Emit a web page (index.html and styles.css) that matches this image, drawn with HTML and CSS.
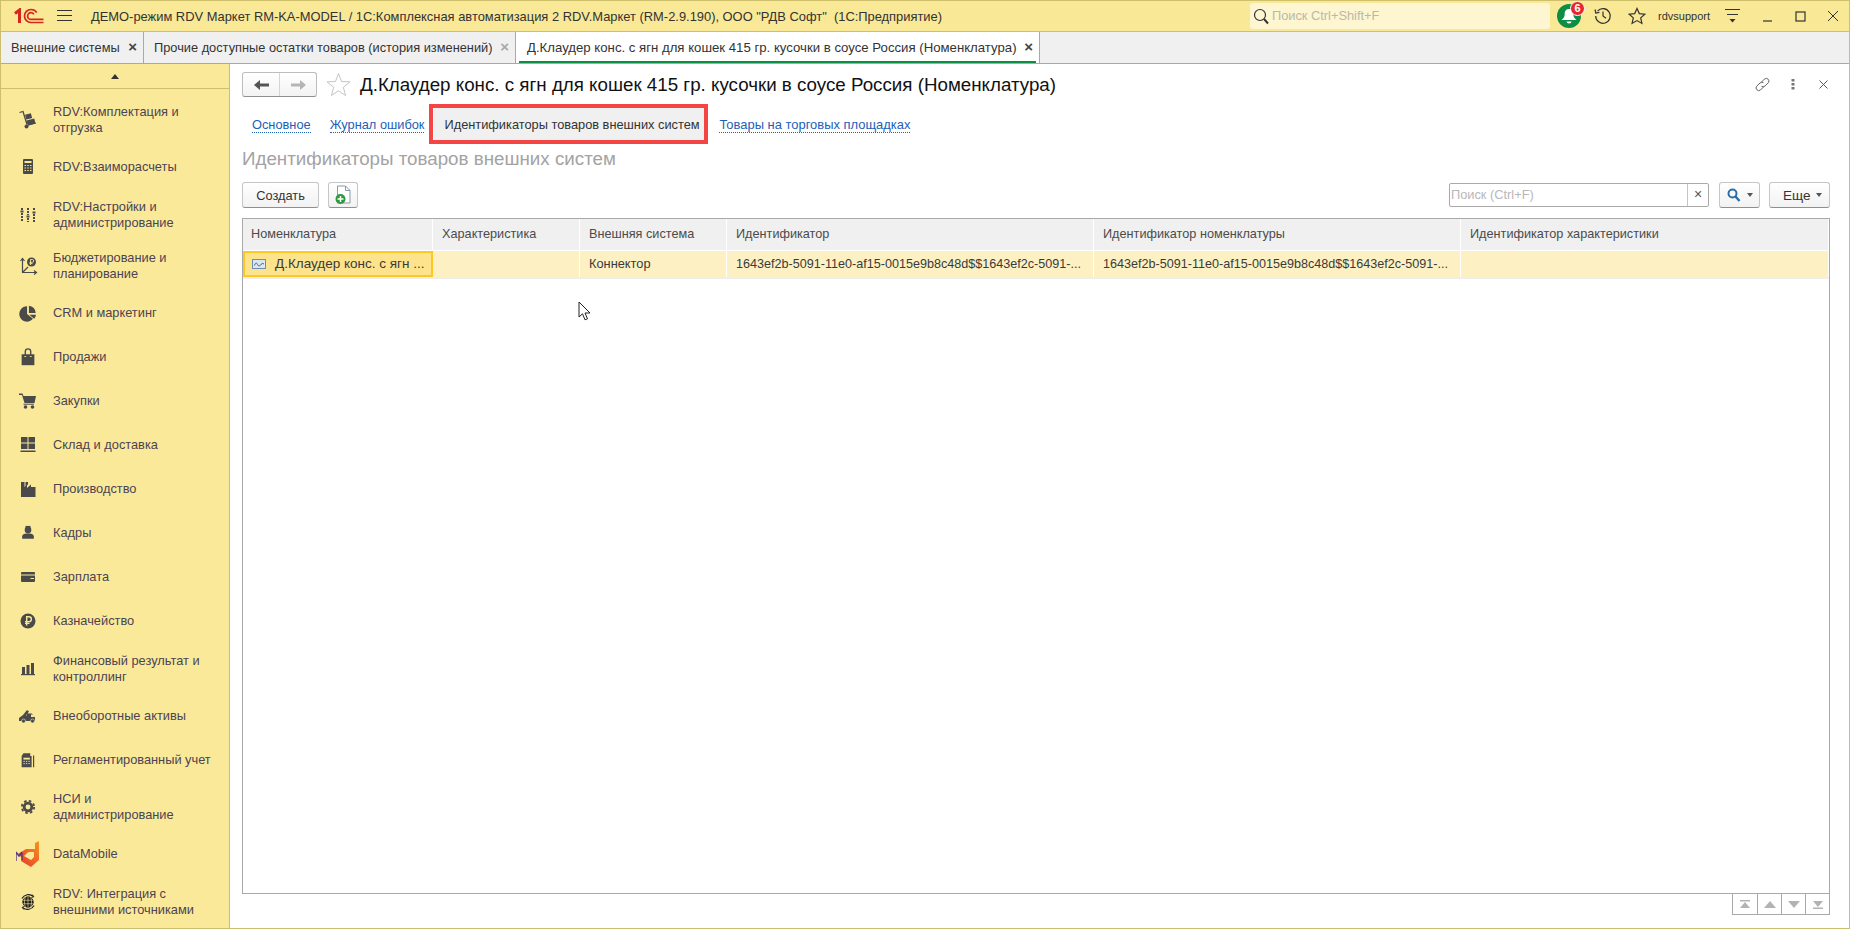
FILE: index.html
```html
<!DOCTYPE html>
<html lang="ru">
<head>
<meta charset="utf-8">
<title>1С</title>
<link rel="stylesheet" href="styles.css">
</head>
<body>
<div class="window">
  <header class="topbar">
    <svg class="logo" width="30" height="16" viewBox="14 8 30 16" fill="none" stroke="#d8261f"><path d="M15 13.5 19.5 10V23" stroke-width="3"/><path d="M36.8 12.5C35.4 10.4 33.4 9.5 31 9.5a6.5 6.5 0 0 0 0 13H43.5" stroke-width="1.7"/><path d="M33.9 14.4C33.2 13.2 32.2 12.6 31 12.6a3.4 3.4 0 0 0 0 6.8H43.5" stroke-width="1.7"/></svg>
    <svg class="burger" width="15" height="12" viewBox="0 0 15 12" stroke="#333"><path d="M0 .5H15M0 5.5H15M0 10.5H15"/></svg>
    <div class="apptitle">ДЕМО-режим RDV Маркет RM-KA-MODEL / 1С:Комплексная автоматизация 2 RDV.Маркет (RM-2.9.190), ООО "РДВ Софт"  (1С:Предприятие)</div>
    <div class="globalsearch">
      <svg width="16" height="17" viewBox="0 0 16 17" fill="none" stroke="#333"><circle cx="7" cy="7" r="5.5" stroke-width="1.2"/><path d="M11 11l4 4.5" stroke-width="2"/></svg>
      <span>Поиск Ctrl+Shift+F</span>
    </div>
    <div class="bell">
      <svg width="24" height="24" viewBox="0 0 24 24"><circle cx="12" cy="12" r="12" fill="#0c8f45"/><path d="M12 5c3 0 4.300 2.300 4.300 5 0 3 1.200 4.500 3.200 6H4.500c2-1.500 3.200-3 3.200-6 0-2.700 1.300-5 4.300-5z" fill="#fff"/><path d="M9.500 17.500h5a2.500 2 0 0 1-5 0z" fill="#fff"/></svg>
      <span class="badge">6</span>
    </div>
    <svg class="tb-history" width="18" height="18" viewBox="0 0 18 18" fill="none" stroke="#333" stroke-width="1.200"><path d="M3.500 4.200A7.300 7.300 0 1 1 1.700 9"/><path d="M1 2.500l.8 3.500 3.600-.6" /><path d="M9 4.500V9l3 2.300"/></svg>
    <svg class="tb-star" width="18" height="18" viewBox="0 0 18 18" fill="none" stroke="#333" stroke-width="1.200"><path d="M9 1.500l2.300 5.100 5.500.6-4.100 3.700 1.200 5.500L9 13.600l-4.900 2.800 1.200-5.500-4.100-3.700 5.500-.6z"/></svg>
    <span class="username">rdvsupport</span>
    <svg class="tb-menu" width="15" height="14" viewBox="0 0 15 14" stroke="#333"><path d="M0 .5H15M2 5.500H13"/><path d="M4.500 10h6l-3 3.500z" fill="#333" stroke="none"/></svg>
    <svg class="tb-min" width="11" height="11" viewBox="0 0 11 11" stroke="#333" stroke-width="1.200"><path d="M1 10H10"/></svg>
    <svg class="tb-max" width="11" height="11" viewBox="0 0 11 11" fill="none" stroke="#333" stroke-width="1.200"><rect x="1" y="1" width="9" height="9"/></svg>
    <svg class="tb-close" width="12" height="12" viewBox="0 0 12 12" stroke="#333"><path d="M1 1 11 11M11 1 1 11"/></svg>
  </header>

  <nav class="tabs">
    <div class="tab tab-a"><span>Внешние системы</span><b class="x x-dark">×</b></div>
    <div class="tab tab-b"><span>Прочие доступные остатки товаров (история изменений)</span><b class="x x-light">×</b></div>
    <div class="tab tab-c"><span>Д.Клаудер конс. с ягн для кошек 415 гр. кусочки в соусе Россия (Номенклатура)</span><b class="x x-dark">×</b></div>
  </nav>

  <div class="body">
    <aside class="sidebar">
      <div class="scrollup"><i class="tri"></i></div>
      <ul class="menu">
        <li class="item two">
          <svg viewBox="0 0 20 20" fill="#4a4a4a"><path d="M1.500 2.500 5 1.500l4 13" fill="none" stroke="#4a4a4a" stroke-width="1.300"/><rect x="7.500" y="4" width="6" height="5" transform="rotate(-15 10 6)"/><rect x="9" y="9.500" width="8" height="5" transform="rotate(-15 13 12)"/><circle cx="8.500" cy="16.500" r="2"/><path d="M9 15.500l9-2.500" stroke="#4a4a4a" fill="none"/></svg>
          <span>RDV:Комплектация и<br>отгрузка</span>
        </li>
        <li class="item">
          <svg viewBox="0 0 20 20"><rect x="3" y="1" width="10" height="15" rx="1" fill="#4a4a4a" transform="translate(2 1)"/><path d="M6.500 4h7v2h-7z" fill="#fbe99a"/><path d="M6.500 8.500h1.500M9.300 8.500h1.500M12 8.500h1.500M6.500 11h1.500M9.300 11h1.500M12 11h1.500M6.500 13.500h1.500M9.300 13.500h1.500M12 13.500h1.500" stroke="#fbe99a"/></svg>
          <span>RDV:Взаиморасчеты</span>
        </li>
        <li class="item tall">
          <svg viewBox="0 0 20 20" stroke="#4a4a4a" stroke-width="2" fill="none"><path d="M4 3v2M4 8v9M10 3v7M10 13v4M16 3v3M16 9v8" stroke-dasharray="2 1"/><path d="M2.500 6.500h3M8.500 11.500h3M14.500 7.500h3"/></svg>
          <span>RDV:Настройки и<br>администрирование</span>
        </li>
        <li class="item two">
          <svg viewBox="0 0 20 20" fill="none" stroke="#4a4a4a" stroke-width="1.200"><path d="M4.500 3v13.500H18"/><path d="M2.500 5l2-2.500 2 2.500" /><path d="M16 14.500l2.500 2-2.500 2"/><path d="M4.500 16.500 10 11"/><circle cx="13.500" cy="6" r="4.500" fill="#4a4a4a" stroke="none"/><path d="M12.500 9V3.500h1.800a1.400 1.400 0 0 1 0 2.800h-2.800M11.500 7.600h3" stroke="#fbe99a" stroke-width=".9"/></svg>
          <span>Бюджетирование и<br>планирование</span>
        </li>
        <li class="item">
          <svg viewBox="-1 -1 22 22" fill="#4a4a4a"><path d="M9 2.500v8.500l6.500 5.400A8.500 8.500 0 1 1 9 2.500z"/><path d="M11 2a8 8 0 0 1 7.500 8H11z"/><path d="M11.500 11.800h7.300a8 8 0 0 1-2 4.400z"/></svg>
          <span>CRM и маркетинг</span>
        </li>
        <li class="item">
          <svg viewBox="-1 -1 22 22" fill="#4a4a4a"><path d="M3 7h14v12H3z"/><path d="M7 9V4a3 3 0 0 1 6 0v5" fill="none" stroke="#4a4a4a" stroke-width="1.500"/><path d="M6 9.500h2M12 9.500h2" stroke="#fbe99a"/></svg>
          <span>Продажи</span>
        </li>
        <li class="item">
          <svg viewBox="0 0 20 20" fill="#4a4a4a"><path d="M1 2.500h3.500l1 2.500H18l-1.500 7H6.500L4 4H1z"/><circle cx="7.500" cy="16" r="1.800"/><circle cx="14.500" cy="16" r="1.800"/><path d="M5.500 13.200H16" stroke="#4a4a4a"/></svg>
          <span>Закупки</span>
        </li>
        <li class="item">
          <svg viewBox="0 0 20 20" fill="#4a4a4a"><rect x="3" y="2" width="6.500" height="5.500"/><rect x="10.500" y="2" width="6.500" height="5.500"/><rect x="3" y="8.500" width="6.500" height="5.500"/><rect x="10.500" y="8.500" width="6.500" height="5.500"/><rect x="2.500" y="15.500" width="15" height="1.500"/></svg>
          <span>Склад и доставка</span>
        </li>
        <li class="item">
          <svg viewBox="0 0 20 20" fill="#4a4a4a"><path d="M3 3h3.500v5L9 5.500V9l4-3.500V8l4.500 0V18H3z"/><path d="M7.500 3H10v2.500L7.500 7.500z"/></svg>
          <span>Производство</span>
        </li>
        <li class="item">
          <svg viewBox="-2 -2 24 24" fill="#4a4a4a"><circle cx="10" cy="6.500" r="4"/><rect x="7" y="1.500" width="6" height="3"/><path d="M3 17v-3c0-2 2.500-3 5-3.300h4c2.500.3 5 1.300 5 3.300v3z"/></svg>
          <span>Кадры</span>
        </li>
        <li class="item">
          <svg viewBox="0 0 20 20"><rect x="3" y="5" width="14" height="10" rx="1" fill="#4a4a4a"/><path d="M3 8h14" stroke="#fbe99a"/><path d="M12.500 11.500H16" stroke="#fbe99a"/></svg>
          <span>Зарплата</span>
        </li>
        <li class="item">
          <svg viewBox="0 0 20 20"><circle cx="10" cy="10" r="7.500" fill="#4a4a4a"/><path d="M8.700 14.500V5.800h2.300a2 2 0 0 1 0 4.800H7M7 12.400h4.500" fill="none" stroke="#fbe99a" stroke-width="1.400"/></svg>
          <span>Казначейство</span>
        </li>
        <li class="item tall">
          <svg viewBox="0 0 20 20" fill="#4a4a4a"><rect x="4" y="8" width="3" height="7"/><rect x="8.500" y="6" width="3" height="9"/><rect x="13" y="4" width="3" height="11"/><rect x="3" y="15" width="14" height="1.200"/></svg>
          <span>Финансовый результат и<br>контроллинг</span>
        </li>
        <li class="item short">
          <svg viewBox="0 0 20 20" fill="#4a4a4a"><path d="M1 15v-3l4-3 4-5 2 1.500-3 4h1V7.500h5l3 4v3.500z"/><path d="M13 8.500h2.300l1.700 2.500h-4z" fill="#fbe99a"/><circle cx="5.500" cy="15" r="2" stroke="#fbe99a" stroke-width=".6"/><circle cx="14.500" cy="15" r="2" stroke="#fbe99a" stroke-width=".6"/></svg>
          <span>Внеоборотные активы</span>
        </li>
        <li class="item">
          <svg viewBox="-1 -1 22 22" fill="#4a4a4a"><path d="M3 5.500 5 2.500h7.500v3h1.500V18H3z"/><rect x="5" y="7.500" width="7" height="2" fill="#fbe99a"/><path d="M5 11.500h1.500M7.700 11.500h1.500M10.500 11.500H12M5 14h1.500M7.700 14h1.500M10.500 14H12" stroke="#fbe99a"/><rect x="15.500" y="5" width="1.300" height="13"/></svg>
          <span>Регламентированный учет</span>
        </li>
        <li class="item two">
          <svg viewBox="-3 -3 26 26"><circle cx="10" cy="10" r="5" fill="none" stroke="#4a4a4a" stroke-width="3.600"/><circle cx="10" cy="10" r="8" fill="none" stroke="#4a4a4a" stroke-width="2.400" stroke-dasharray="3.300 3"/></svg>
          <span>НСИ и<br>администрирование</span>
        </li>
        <li class="item dm">
          <svg viewBox="0 0 24 26"><defs><linearGradient id="dmg" x1="0" y1="1" x2="1" y2="0"><stop offset="0" stop-color="#e8352a"/><stop offset="1" stop-color="#f7941d"/></linearGradient></defs><path d="M19 2 23 0V19l-8 7-10-6 1-3L2 13l8-5h9zM11 12l-3 3 7 4 3-3v-5h-5z" fill="url(#dmg)" fill-rule="evenodd"/><path d="M0 11v9M0 11l3 4 3-4M6 12v7" fill="none" stroke="#5b3a7a" stroke-width="1.400"/></svg>
          <span>DataMobile</span>
        </li>
        <li class="item tall">
          <svg viewBox="-1.500 -1.500 23 23" fill="none" stroke="#1c1c1c"><circle cx="10" cy="10" r="6" fill="#1c1c1c"/><path d="M4.500 8h11M4.500 12h11M10 4v12M7 4.500c-1.500 3.500-1.500 7.500 0 11M13 4.500c1.500 3.500 1.500 7.500 0 11" stroke="#fbe99a" stroke-width=".7"/><path d="M3 6A8.500 8.500 0 0 1 16 3.500M17 14a8.500 8.500 0 0 1-13 2.500" stroke-width="1.300"/><path d="M14.500 1.500l2.500 2.300-3 1M5.500 18.500 3 16.200l3-1" stroke-width="1.100"/></svg>
          <span>RDV: Интеграция с<br>внешними источниками</span>
        </li>
      </ul>
    </aside>

    <main class="form">
      <div class="formhead">
        <div class="navgroup">
          <button class="navbtn"><svg width="15" height="12" viewBox="0 0 15 12" fill="#555"><path d="M0 6 6 1v3.500h9v3H6V11z"/></svg></button>
          <button class="navbtn"><svg width="15" height="12" viewBox="0 0 15 12" fill="#b5b5b5"><path d="M15 6 9 1v3.500H0v3h9V11z"/></svg></button>
        </div>
        <svg class="bigstar" width="25" height="25" viewBox="0 0 25 25" fill="none" stroke="#c4c4c4"><path d="M12.500 1.500l3 8 8.500.4-6.700 5.300 2.300 8.300-7.100-4.700-7.100 4.700 2.300-8.300L1 9.900l8.500-.4z"/></svg>
        <h1 class="formtitle">Д.Клаудер конс. с ягн для кошек 415 гр. кусочки в соусе Россия (Номенклатура)</h1>
        <div class="formtools">
          <svg class="ft-link" width="17" height="17" viewBox="0 0 17 17" fill="none" stroke="#666"><path d="M7 6.500 10.500 3a2.700 2.700 0 0 1 3.800 3.800L11 10a2.700 2.700 0 0 1-3.500.2"/><path d="M10 10.500 6.500 14a2.700 2.700 0 0 1-3.800-3.800L6 7a2.700 2.700 0 0 1 3.500-.2"/></svg>
          <svg class="ft-dots" width="4" height="11" viewBox="0 0 4 11" fill="#777"><rect x="0.500" y="0" width="3" height="2.500"/><rect x="0.500" y="4" width="3" height="2.500"/><rect x="0.500" y="8" width="3" height="2.500"/></svg>
          <svg class="ft-close" width="9" height="9" viewBox="0 0 9 9" stroke="#555"><path d="M.5.500l8 8M8.500.500l-8 8"/></svg>
        </div>
      </div>

      <div class="pagetabs">
        <a class="plink">Основное</a>
        <a class="plink">Журнал ошибок</a>
        <span class="pactive">Идентификаторы товаров внешних систем</span>
        <a class="plink last">Товары на торговых площадках</a>
      </div>

      <h2 class="section">Идентификаторы товаров внешних систем</h2>

      <div class="toolbar">
        <button class="btn create">Создать</button>
        <button class="btn add">
          <svg width="18" height="20" viewBox="0 0 18 20"><path d="M3.500 1h8L16 5.500V18H3.500z" fill="#fff" stroke="#8a9aa8"/><path d="M11.500 1v4.500H16" fill="none" stroke="#8a9aa8"/><circle cx="6.500" cy="14" r="5" fill="#2a9a3c"/><path d="M6.500 11v6M3.500 14h6" stroke="#fff" stroke-width="1.500"/></svg>
        </button>
        <div class="searchbox"><span class="sph">Поиск (Ctrl+F)</span><span class="sclear">×</span></div>
        <button class="btn lens">
          <svg width="14" height="15" viewBox="0 0 14 15" fill="none" stroke="#2a6fa8"><circle cx="5.500" cy="5.500" r="4" stroke-width="2"/><path d="M8.500 8.500l4 4.500" stroke-width="2.400"/></svg>
          <i class="caret"></i>
        </button>
        <button class="btn more">Еще<i class="caret"></i></button>
      </div>

      <div class="table">
        <div class="thead">
          <div>Номенклатура</div><div>Характеристика</div><div>Внешняя система</div><div>Идентификатор</div><div>Идентификатор номенклатуры</div><div>Идентификатор характеристики</div>
        </div>
        <div class="trow">
          <div class="cur">
            <svg width="14" height="10" viewBox="0 0 14 10"><rect x=".5" y=".5" width="13" height="9" fill="#dce6f0" stroke="#6f8fb0"/><path d="M2.500 6.500c1-3 2-3 3-1s2 1.500 3.500 0 2-1 3-.5" fill="none" stroke="#35608f"/></svg>
            <span>Д.Клаудер конс. с ягн ...</span>
          </div>
          <div></div>
          <div>Коннектор</div>
          <div class="idcell">1643ef2b-5091-11e0-af15-0015e9b8c48d$$1643ef2c-5091-...</div>
          <div class="idcell">1643ef2b-5091-11e0-af15-0015e9b8c48d$$1643ef2c-5091-...</div>
          <div></div>
        </div>
        <svg class="cursor" width="13" height="20" viewBox="0 0 13 20"><path d="M1 1v15l3.500-3.200 2.500 6 2.500-1-2.500-5.800H12z" fill="#fff" stroke="#222"/></svg>
      </div>

      <div class="pager">
        <span><svg width="12" height="9" viewBox="0 0 12 9" fill="#b3b3b3"><path d="M1 0h10v1.500H1zM6 2l5 6H1z"/></svg></span>
        <span><svg width="12" height="7" viewBox="0 0 12 7" fill="#b3b3b3"><path d="M6 0l6 7H0z"/></svg></span>
        <span><svg width="12" height="7" viewBox="0 0 12 7" fill="#b3b3b3"><path d="M6 7l6-7H0z"/></svg></span>
        <span><svg width="12" height="9" viewBox="0 0 12 9" fill="#b3b3b3"><path d="M1 7.500h10V9H1zM6 7l5-6H1z"/></svg></span>
      </div>
    </main>
  </div>
</div>
</body>
</html>
```
FILE: styles.css
```css
* { box-sizing: border-box; }
html, body { margin: 0; height: 100%; overflow: hidden; }
body { font: 12.8px/16px "Liberation Sans", Arial, sans-serif; color: #333; background: #fff; }
.window { height: 929px; border: 1px solid #cdbf6c; display: flex; flex-direction: column; }

.topbar { height: 31px; flex: none; background: #f9e896; border-bottom: 1px solid #cdbf6c; display: flex; align-items: center; position: relative; }
.logo { margin-left: 13px; flex: none; }
.burger { margin-left: 13px; flex: none; }
.apptitle { margin-left: 19px; padding-top: 2px; white-space: pre; width: 1159px; flex: none; font-size: 12.9px; }
.globalsearch { width: 300px; height: 26px; flex: none; background: #fdf6d0; border-radius: 3px; display: flex; align-items: center; gap: 3px; padding-left: 3px; color: #b9b9a8; }
.bell { position: relative; width: 24px; height: 24px; margin-left: 7px; flex: none; }
.bell svg { display: block; }
.badge { position: absolute; top: -3px; right: -4px; width: 15px; height: 15px; border-radius: 50%; background: #e8262a; border: 1px solid #fff; color: #fff; font-weight: 700; font-size: 11px; line-height: 13px; text-align: center; }
.tb-history { margin-left: 13px; flex: none; }
.tb-star { margin-left: 16px; flex: none; }
.username { margin-left: 12px; font-size: 11px; flex: none; }
.tb-menu { margin-left: 15px; flex: none; }
.tb-min { margin-left: 22px; flex: none; }
.tb-max { margin-left: 22px; flex: none; }
.tb-close { margin-left: 21px; flex: none; }

.tabs { height: 32px; flex: none; display: flex; background: #f0f0f0; border-bottom: 1px solid #a9a9a9; }
.tab { display: flex; align-items: center; height: 31px; border-right: 1px solid #a9a9a9; white-space: nowrap; position: relative; }
.tab-a { width: 143px; padding-left: 10px; }
.tab-b { width: 372px; padding-left: 10px; }
.tab-c { width: 524px; padding-left: 11px; background: #fff; font-size: 13.2px; }
.tab-c::after { content: ""; position: absolute; left: 3px; right: 3px; bottom: 0; height: 2px; background: #0b8f45; }
.x { font: 700 15px/16px "Liberation Sans", sans-serif; position: absolute; top: 7px; right: 6px; }
.x-dark { color: #444; }
.x-light { color: #a8a8a8; }

.body { flex: 1; min-height: 0; display: flex; }
.sidebar { width: 229px; flex: none; background: #fbe99a; border-right: 1px solid #cdbf6c; display: flex; flex-direction: column; }
.scrollup { height: 25px; flex: none; border-bottom: 1px solid #cdbf6c; display: flex; justify-content: center; align-items: center; }
.tri { width: 0; height: 0; border: 4px solid transparent; border-top: 0; border-bottom: 5px solid #333; }
.menu { list-style: none; margin: 6px 0 0; padding: 0; }
.item { height: 44px; display: flex; align-items: center; padding-left: 17px; gap: 15px; color: #4b4452; white-space: nowrap; }
.item svg { width: 20px; height: 20px; flex: none; }
.item.two { height: 50px; }
.item.tall { height: 52px; }
.item.short { height: 43px; padding-bottom: 2px; }
.item.dm svg { width: 24px; height: 26px; margin-left: -2px; margin-right: -2px; }

.form { flex: 1; min-width: 0; display: flex; flex-direction: column; padding: 8px 19px 13px 12px; }
.formhead { height: 25px; flex: none; display: flex; align-items: center; }
.navgroup { width: 75px; height: 25px; flex: none; display: flex; background: linear-gradient(#fff, #f3f3f3); border: 1px solid #bdbdbd; border-bottom-color: #8f8f8f; border-radius: 3px; }
.navbtn { flex: 1; padding: 0; border: 0; background: none; display: flex; align-items: center; justify-content: center; }
.navbtn + .navbtn { border-left: 1px solid #d5d5d5; }
.bigstar { margin-left: 9px; flex: none; }
.formtitle { margin: 0 0 0 9px; font: 400 18.75px/22px "Liberation Sans", sans-serif; color: #111; white-space: nowrap; }
.formtools { margin-left: auto; display: flex; align-items: center; padding-right: 2px; }
.ft-dots { margin-left: 20px; }
.ft-close { margin-left: 24px; }

.pagetabs { display: flex; align-items: center; height: 40px; margin-top: 7px; flex: none; padding-left: 10px; }
.plink { color: #1d5fb8; border-bottom: 1px dotted #1d5fb8; line-height: 14px; margin-top: 2px; white-space: nowrap; }
.plink + .plink { margin-left: 19px; }
.plink.last { margin-left: 0; font-size: 12.95px; }
.pactive { margin: 0 11px 0 5px; width: 279px; height: 40px; padding: 2px 0 0 11px; display: flex; align-items: center; flex: none; background: #f0f0f0; border: 4px solid #f44545; box-shadow: inset 1px 0 #fff; color: #333; white-space: nowrap; }

.section { margin: 3px 0 0; height: 24px; font: 400 18.75px/24px "Liberation Sans", sans-serif; color: #a3a3a3; flex: none; white-space: nowrap; }

.toolbar { display: flex; align-items: center; height: 26px; margin-top: 11px; flex: none; }
.btn { height: 26px; font: 12.8px "Liberation Sans", sans-serif; color: #333; background: linear-gradient(#fff, #f2f2f2); border: 1px solid #c6c6c6; border-bottom-color: #8f8f8f; border-radius: 3px; padding: 0; display: flex; align-items: center; justify-content: center; }
.create { width: 77px; }
.add { width: 30px; margin-left: 9px; }
.searchbox { margin-left: auto; width: 260px; height: 24px; border: 1px solid #a9a9a9; border-radius: 2px; display: flex; align-items: center; color: #b8b8b8; }
.sph { flex: 1; padding-left: 1px; }
.sclear { width: 21px; height: 22px; border-left: 1px solid #c4c4c4; color: #555; text-align: center; line-height: 21px; font-size: 14px; }
.lens { width: 41px; margin-left: 10px; gap: 6px; }
.more { width: 61px; margin-left: 9px; gap: 6px; justify-content: flex-start; padding-left: 13px; font-size: 13.5px; }
.caret { width: 0; height: 0; border: 3.500px solid transparent; border-bottom: 0; border-top: 4px solid #555; }

.table { flex: 1; min-height: 0; margin-top: 10px; border: 1px solid #a9a9a9; position: relative; }
.thead, .trow { display: grid; grid-template-columns: 190px 147px 147px 367px 367px 1fr; }
.thead { height: 32px; background: #f0f0f0; }
.thead > div { padding: 0 0 0 9px; line-height: 30px; font-size: 12.7px; border-right: 1px solid #fff; border-bottom: 1px solid #fff; color: #4b4b4b; white-space: nowrap; overflow: hidden; }
.thead > div:first-child { padding-left: 8px; }
.trow { height: 28px; background: #fdf1c3; border-bottom: 2px solid #eee; }
.trow > div { padding: 0 0 0 9px; line-height: 26px; border-right: 1px solid #fff; white-space: nowrap; overflow: hidden; color: #3a3a3a; }
.trow > div.cur { display: flex; align-items: center; gap: 9px; padding: 0 0 0 7px; background: #fde38c; border: 2px solid #fbc824; font-size: 13.5px; }
.trow > div.idcell { font-size: 12.6px; }
.cur svg { flex: none; }
.cursor { position: absolute; left: 335px; top: 82px; }

.pager { align-self: flex-end; flex: none; display: flex; height: 21px; border: 1px solid #a9a9a9; border-top: 0; }
.pager span { width: 24px; display: flex; align-items: center; justify-content: center; }
.pager span + span { border-left: 1px solid #a9a9a9; }
```
